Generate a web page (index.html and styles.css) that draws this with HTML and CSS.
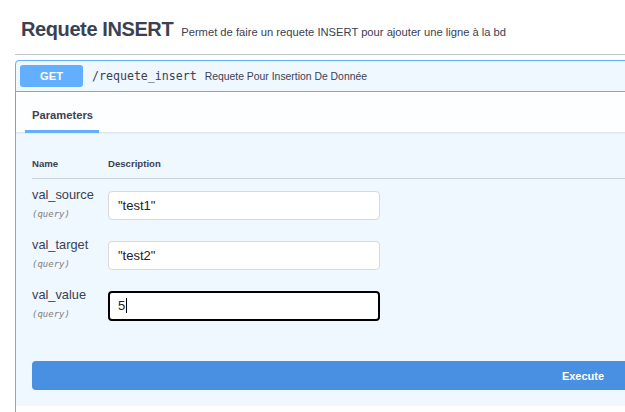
FILE: index.html
```html
<!DOCTYPE html>
<html lang="fr">
<head>
<meta charset="utf-8">
<title>Requete INSERT</title>
<link rel="stylesheet" href="styles.css">
</head>
<body>
<div class="page">
  <h3 class="tag"><span class="tag-name">Requete INSERT</span><small class="tag-desc">Permet de faire un requete INSERT pour ajouter une ligne à la bd</small></h3>
  <div class="opblock">
    <div class="summary">
      <span class="method">GET</span>
      <span class="path">/requete_insert</span>
      <span class="summary-desc">Requete Pour Insertion De Donnée</span>
    </div>
    <div class="section-header">
      <div class="tab">
        <h4 class="tab-title">Parameters</h4>
        <div class="tab-bar"></div>
      </div>
    </div>
    <div class="params">
      <div class="row head">
        <div class="th">Name</div>
        <div class="th">Description</div>
      </div>
      <div class="row">
        <div class="pname"><div class="pname-label">val_source</div><div class="pin">(query)</div></div>
        <div class="cell"><div class="input">"test1"</div></div>
      </div>
      <div class="row">
        <div class="pname"><div class="pname-label">val_target</div><div class="pin">(query)</div></div>
        <div class="cell"><div class="input">"test2"</div></div>
      </div>
      <div class="row">
        <div class="pname"><div class="pname-label">val_value</div><div class="pin">(query)</div></div>
        <div class="cell"><div class="input focused">5<span class="caret"></span></div></div>
      </div>
    </div>
    <div class="execute-wrap">
      <button class="execute">Execute</button>
    </div>
    <div class="responses-header"></div>
  </div>
</div>
</body>
</html>
```
FILE: styles.css
```css
html, body {
  margin: 0;
  padding: 0;
  overflow: hidden;
  background: #fff;
}
body {
  font-family: "Liberation Sans", Arial, sans-serif;
  color: #3b4151;
}
.page {
  width: 1136px;
  padding-left: 15px;
}
.tag {
  margin: 0;
  padding: 17px 0 13px 6px;
  border-bottom: 1px solid #c4c6cb;
  display: flex;
  align-items: baseline;
}
.tag-name {
  font-size: 20px;
  line-height: 24px;
  font-weight: bold;
  letter-spacing: -0.4px;
}
.tag-desc {
  font-size: 11.2px;
  font-weight: normal;
  margin-left: 8px;
}
.opblock {
  margin-top: 5px;
  border: 1px solid #61affe;
  border-radius: 4px;
  background: #eff7ff;
}
.summary {
  display: flex;
  align-items: center;
  padding: 4px;
  border-bottom: 1px solid #61affe;
}
.method {
  width: 63px;
  height: 22px;
  line-height: 22px;
  text-align: center;
  background: #61affe;
  color: #fff;
  font-weight: bold;
  font-size: 11.2px;
  border-radius: 3px;
}
.path {
  margin-left: 9px;
  font-family: "DejaVu Sans Mono", "Liberation Mono", monospace;
  font-size: 11.6px;
  color: #3b4151;
}
.summary-desc {
  margin-left: 8px;
  font-size: 10.4px;
}
.section-header {
  height: 40px;
  box-sizing: border-box;
  padding: 13px 16px 0;
  background: #fcfeff;
  box-shadow: 0 1px 2px rgba(0, 0, 0, 0.1);
}
.tab {
  display: inline-flex;
  flex-direction: column;
}
.tab-title {
  margin: 0;
  font-size: 11.2px;
  line-height: 14px;
  font-weight: bold;
}
.tab-bar {
  margin: 8px 0 0 -7px;
  width: 74px;
  height: 3px;
  background: #61affe;
}
.params {
  padding: 16px 16px 16px;
}
.row {
  display: grid;
  grid-template-columns: 76px 272px;
  align-items: start;
  padding: 12px 0 9px;
}
.row.head {
  padding: 10px 0 8px;
  border-bottom: 1px solid rgba(59, 65, 81, 0.2);
}
.th {
  font-size: 9.6px;
  line-height: 12px;
  font-weight: bold;
}
.pname {
  margin-top: -4px;
  height: 33px;
}
.pname-label {
  font-size: 12.8px;
  line-height: 16px;
}
.pin {
  margin-top: 6px;
  font-family: "DejaVu Sans Mono", monospace;
  font-style: italic;
  font-size: 9px;
  line-height: 11px;
  color: #808080;
}
.input {
  height: 29px;
  box-sizing: border-box;
  border: 1px solid #d9d9d9;
  border-radius: 4px;
  background: #fff;
  padding: 0 9px;
  font-size: 13px;
  line-height: 27px;
  color: #222;
}
.input.focused {
  height: 30px;
  border: 2px solid #000;
  padding: 0 8px;
  line-height: 26px;
}
.caret {
  display: inline-block;
  width: 1px;
  height: 15px;
  background: #000;
  vertical-align: -3px;
  margin-left: 1px;
}
.execute-wrap {
  padding: 15px 16px 16px;
}
.execute {
  display: block;
  width: 100%;
  height: 29px;
  border: 0;
  border-radius: 4px;
  background: #4990e2;
  color: #fff;
  font-family: "Liberation Sans", Arial, sans-serif;
  font-size: 11px;
  font-weight: bold;
  padding: 0;
}
.responses-header {
  height: 40px;
  background: #fcfeff;
}
```
